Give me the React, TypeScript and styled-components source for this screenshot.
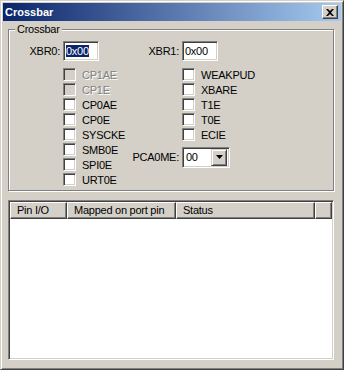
import styled, { createGlobalStyle } from 'styled-components'

const face = '#D4D0C8'

const GlobalStyle = createGlobalStyle`
  html, body {
    margin: 0;
    padding: 0;
    background: ${face};
  }
  body {
    font-family: 'Liberation Sans', Arial, sans-serif;
    font-size: 11px;
    letter-spacing: -0.25px;
    color: #000;
  }
`

const leftChecks = [
  { label: 'CP1AE', disabled: true },
  { label: 'CP1E', disabled: true },
  { label: 'CP0AE' },
  { label: 'CP0E' },
  { label: 'SYSCKE' },
  { label: 'SMB0E' },
  { label: 'SPI0E' },
  { label: 'URT0E' },
]

const rightChecks = ['WEAKPUD', 'XBARE', 'T1E', 'T0E', 'ECIE']

const columns = [
  { title: 'Pin I/O', width: 57 },
  { title: 'Mapped on port pin', width: 109 },
  { title: 'Status', width: 139 },
  { title: '' },
]

function App() {
  return (
    <>
      <GlobalStyle />
      <Window>
        <TitleBar>
          <Title>Crossbar</Title>
          <CloseButton>
            <svg width='8' height='7' viewBox='0 0 8 7'>
              <path d='M0 0h2l2 2 2-2h2L5 3.5 8 7H6L4 5 2 7H0l3-3.5z' fill='#000' />
            </svg>
          </CloseButton>
        </TitleBar>
        <Client>
          <Group>
            <Legend>Crossbar</Legend>
            <Grid>
              <FieldLabel $col={1} $row='1'>XBR0:</FieldLabel>
              <TextBox $col={2} $row='1'>
                <Selected>0x00</Selected>
              </TextBox>
              <FieldLabel $col={3} $row='1'>XBR1:</FieldLabel>
              <TextBox $col={4} $row='1'>0x00</TextBox>

              {leftChecks.map((c, i) => (
                <CheckRow key={c.label} $col={2} $row={String(i + 2)}>
                  <Box $disabled={c.disabled} />
                  <CheckText $disabled={c.disabled}>{c.label}</CheckText>
                </CheckRow>
              ))}
              {rightChecks.map((c, i) => (
                <CheckRow key={c} $col={4} $row={String(i + 2)}>
                  <Box />
                  <CheckText>{c}</CheckText>
                </CheckRow>
              ))}

              <FieldLabel $col={3} $row='7 / span 2' $center>PCA0ME:</FieldLabel>
              <Combo $col={4} $row='7 / span 2'>
                <ComboValue>00</ComboValue>
                <DropButton>
                  <svg width='7' height='4' viewBox='0 0 7 4'>
                    <path d='M0 0h7L3.5 4z' fill='#000' />
                  </svg>
                </DropButton>
              </Combo>
            </Grid>
          </Group>
          <ListView>
            <Header>
              {columns.map((c, i) => (
                <HeaderCell key={i} $width={c.width}>
                  {c.title}
                </HeaderCell>
              ))}
            </Header>
          </ListView>
        </Client>
      </Window>
    </>
  )
}

const Window = styled.div`
  width: 344px;
  height: 370px;
  box-sizing: border-box;
  display: flex;
  flex-direction: column;
  padding: 2px;
  background: ${face};
  border: 1px solid;
  border-color: ${face} #404040 #404040 ${face};
  box-shadow: inset 1px 1px #fff, inset -1px -1px #808080;
`

const TitleBar = styled.div`
  height: 18px;
  display: flex;
  align-items: center;
  padding: 0 3px 0 2px;
  background: linear-gradient(to right, #0a246a, #a6caf0);
`

const Title = styled.div`
  color: #fff;
  font-weight: bold;
  font-size: 11px;
  letter-spacing: 0;
`

const CloseButton = styled.div`
  margin-left: auto;
  width: 16px;
  height: 14px;
  box-sizing: border-box;
  display: flex;
  align-items: center;
  justify-content: center;
  background: ${face};
  border: 1px solid;
  border-color: #fff #404040 #404040 #fff;
  box-shadow: inset -1px -1px #808080;
`

const Client = styled.div`
  flex: 1;
  display: flex;
  flex-direction: column;
  padding: 2px 7px 7px 5px;
`

const Group = styled.fieldset`
  margin: 0;
  padding: 5px 0 3px 0;
  min-width: 0;
  border: 1px solid #808080;
  box-shadow: 1px 1px 0 #fff, inset 1px 1px 0 #fff;
`

const Legend = styled.legend`
  margin-left: 6px;
  padding: 0 2px;
  line-height: 13px;
  background: ${face};
`

const Grid = styled.div`
  display: grid;
  grid-template-columns: 52px 68px 47px 1fr;
  grid-template-rows: 26px repeat(8, 15px);
  column-gap: 2px;
`

type CellProps = { $col: number; $row: string }

const FieldLabel = styled.div<CellProps & { $center?: boolean }>`
  grid-column: ${(p) => p.$col};
  grid-row: ${(p) => p.$row};
  justify-self: end;
  align-self: ${(p) => (p.$center ? 'center' : 'start')};
  line-height: 20px;
  white-space: nowrap;
  padding-right: 1px;
`

const sunken = `
  box-sizing: border-box;
  border: 1px solid;
  border-color: #808080 #fff #fff #808080;
  box-shadow: inset 1px 1px #404040, inset -1px -1px ${face};
`

const TextBox = styled.div<CellProps>`
  grid-column: ${(p) => p.$col};
  grid-row: ${(p) => p.$row};
  align-self: start;
  width: 36px;
  height: 20px;
  ${sunken}
  background: #fff;
  padding: 2px 0 0 2px;
  line-height: 14px;
`

const Selected = styled.span`
  background: #0a246a;
  color: #fff;
`

const CheckRow = styled.div<CellProps>`
  grid-column: ${(p) => p.$col};
  grid-row: ${(p) => p.$row};
  display: flex;
  align-items: center;
  gap: 6px;
  white-space: nowrap;
`

const Box = styled.div<{ $disabled?: boolean }>`
  width: 13px;
  height: 13px;
  flex: none;
  ${sunken}
  background: ${(p) => (p.$disabled ? face : '#fff')};
`

const CheckText = styled.span<{ $disabled?: boolean }>`
  color: ${(p) => (p.$disabled ? '#808080' : '#000')};
  text-shadow: ${(p) => (p.$disabled ? '1px 1px #fff' : 'none')};
`

const Combo = styled.div<CellProps>`
  grid-column: ${(p) => p.$col};
  grid-row: ${(p) => p.$row};
  align-self: center;
  width: 48px;
  height: 21px;
  ${sunken}
  background: #fff;
  display: flex;
  align-items: center;
  padding: 2px;
`

const ComboValue = styled.span`
  flex: 1;
  padding-left: 1px;
`

const DropButton = styled.div`
  width: 16px;
  height: 17px;
  box-sizing: border-box;
  display: flex;
  align-items: center;
  justify-content: center;
  background: ${face};
  border: 1px solid;
  border-color: ${face} #404040 #404040 ${face};
  box-shadow: inset 1px 1px #fff, inset -1px -1px #808080;
`

const ListView = styled.div`
  flex: 1;
  margin-top: 9px;
  ${sunken}
  background: #fff;
  padding: 1px;
  display: flex;
  flex-direction: column;
`

const Header = styled.div`
  display: flex;
  height: 17px;
`

const HeaderCell = styled.div<{ $width?: number }>`
  ${(p) => (p.$width ? `width: ${p.$width}px;` : 'flex: 1;')}
  box-sizing: border-box;
  background: ${face};
  border: 1px solid;
  border-color: #fff #404040 #404040 #fff;
  box-shadow: inset -1px -1px #808080;
  padding-left: 6px;
  line-height: 14px;
  white-space: nowrap;
  overflow: hidden;
`

export default App
